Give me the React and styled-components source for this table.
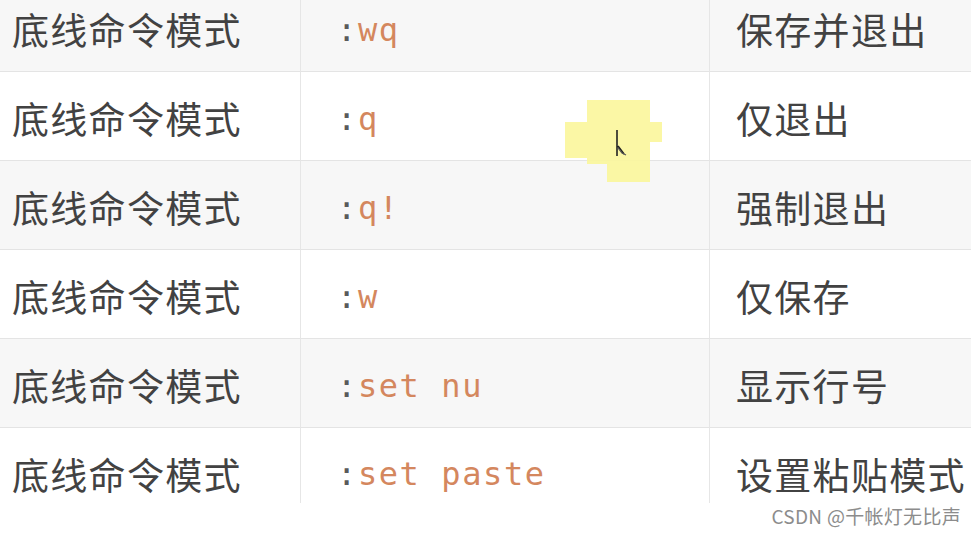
import React from "react";
import styled, { createGlobalStyle } from "styled-components";

const Global = createGlobalStyle`
  html, body { margin: 0; padding: 0; background: #ffffff; }
  body { font-family: "Noto Sans CJK SC", "Noto Sans", sans-serif; }
`;

const Page = styled.div`
  position: relative;
  width: 976px;
  height: 535px;
  overflow: hidden;
  background: #ffffff;
`;

const Table = styled.div`
  display: grid;
  grid-template-columns: 301px 409px 261px;
  margin-top: -17px;
  width: 971px;
`;

const Row = styled.div`
  display: contents;
`;

const Cell = styled.div`
  height: 88px;
  display: flex;
  align-items: center;
  box-sizing: content-box;
  background: ${(p) => (p.$striped ? "#f7f7f7" : "#ffffff")};
  border-bottom: 1px solid #e4e4e4;
  border-right: ${(p) => (p.$edge ? "none" : "1px solid #e6e6e6")};
  padding-left: ${(p) => p.$pad}px;
  ${(p) =>
    p.$last
      ? "align-items: flex-start; padding-top: 24px; height: 51px; border-bottom: none;"
      : ""}
`;

const Label = styled.span`
  font-family: "Noto Sans CJK SC", "Noto Sans", sans-serif;
  font-size: 37px;
  color: #424242;
  letter-spacing: 1.3px;
  line-height: 1;
  margin-top: 4px;
`;

const Code = styled.code`
  font-family: "DejaVu Sans Mono", "Liberation Mono", monospace;
  font-size: 32px;
  color: #d4875e;
  line-height: 1;
  margin-top: 6px;
  letter-spacing: 1.6px;
`;

const Colon = styled.span`
  color: #5a5a5a;
`;

const Watermark = styled.div`
  position: absolute;
  right: 15px;
  bottom: 6px;
  font-family: "Noto Sans CJK SC", "Noto Sans", sans-serif;
  font-size: 19px;
  color: #8c8c8c;
  letter-spacing: 0.3px;
`;

const Highlight = styled.svg`
  position: absolute;
  left: 560px;
  top: 98px;
  pointer-events: none;
`;

const rows = [
  { cmd: "wq", desc: "保存并退出" },
  { cmd: "q", desc: "仅退出" },
  { cmd: "q!", desc: "强制退出" },
  { cmd: "w", desc: "仅保存" },
  { cmd: "set nu", desc: "显示行号" },
  { cmd: "set paste", desc: "设置粘贴模式" },
];

export default function App() {
  return (
    <Page>
      <Global />
      <Table>
        {rows.map((r, i) => {
          const striped = i % 2 === 0;
          const last = i === rows.length - 1;
          return (
            <Row key={i}>
              <Cell $striped={striped} $last={last} $pad={12}>
                <Label>底线命令模式</Label>
              </Cell>
              <Cell $striped={striped} $last={last} $pad={36}>
                <Code>
                  <Colon>:</Colon>
                  {r.cmd}
                </Code>
              </Cell>
              <Cell $striped={striped} $last={last} $pad={26} $edge>
                <Label>{r.desc}</Label>
              </Cell>
            </Row>
          );
        })}
      </Table>
      <Highlight width="104" height="90" viewBox="0 0 104 90">
        <g fill="#fbf79c" opacity="0.9">
          <rect x="27" y="2" width="63" height="64" />
          <rect x="5" y="24" width="30" height="36" />
          <rect x="47" y="60" width="43" height="24" />
          <rect x="88" y="24" width="14" height="20" />
        </g>
        <path
          d="M57 32 L57 58 M58 48 L61 52 L64 56"
          stroke="#222"
          strokeWidth="1.6"
          fill="none"
        />
        <path d="M58 50 L62 55 L66 57" stroke="#555" strokeWidth="1.2" fill="none" />
      </Highlight>
      <Watermark>CSDN @千帐灯无比声</Watermark>
    </Page>
  );
}
